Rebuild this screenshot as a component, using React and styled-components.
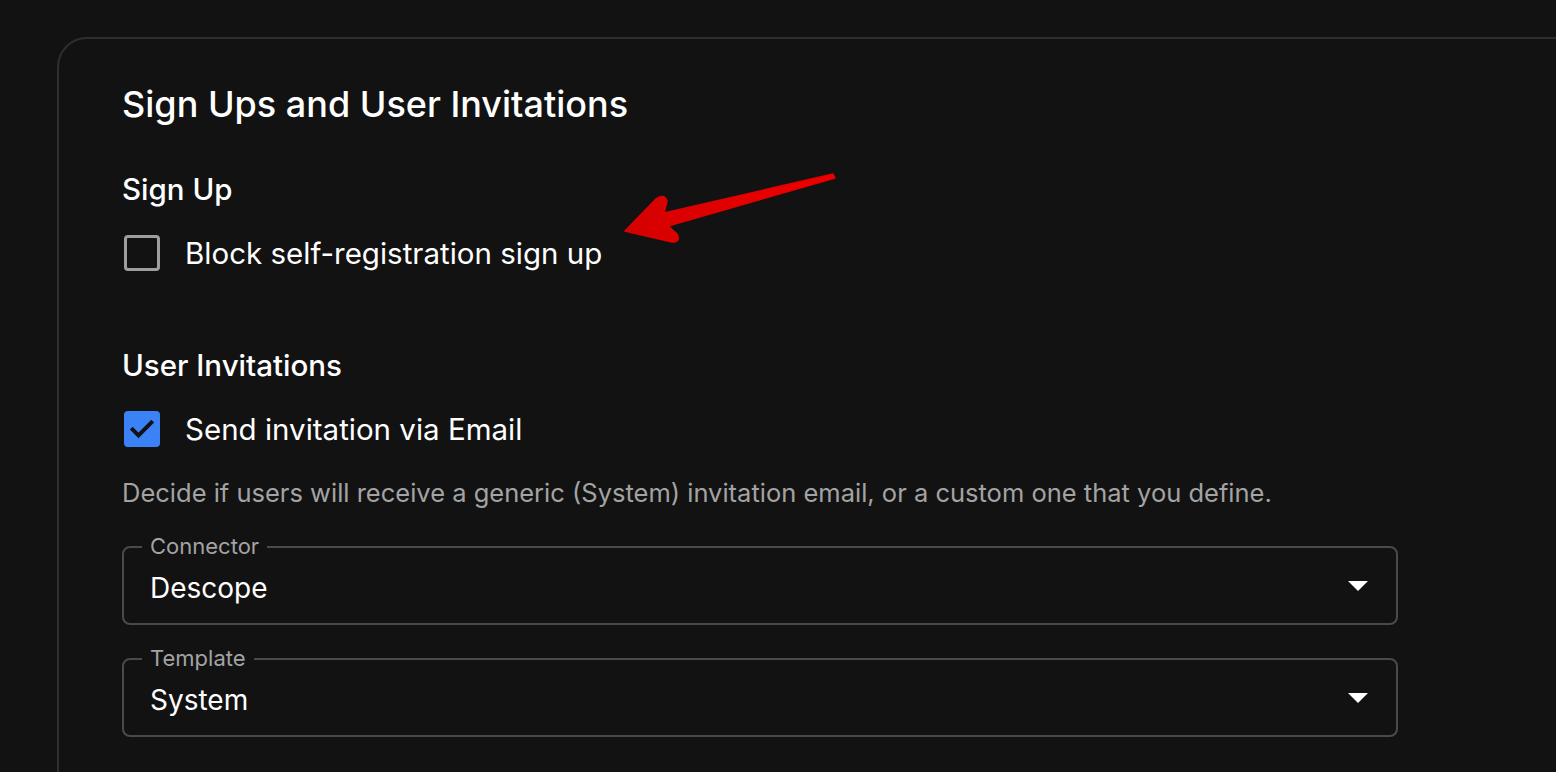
import React from "react"
import styled, {createGlobalStyle} from "styled-components"

const Global = createGlobalStyle`
  html, body {
    margin: 0;
    padding: 0;
    background: #121212;
    overflow: hidden;
  }
  body {
    font-family: Inter, "Noto Sans", sans-serif;
    color: #ffffff;
  }
`

const Page = styled.div`
  position: relative;
  width: 1556px;
  height: 772px;
  overflow: hidden;
  padding: 37px 0 0 57px;
  box-sizing: border-box;
`

const Card = styled.section`
  width: 1600px;
  height: 900px;
  box-sizing: border-box;
  border: 2px solid #2f2f2f;
  border-radius: 30px;
  background: #121212;
  padding: 42px 0 0 63px;
`

const Title = styled.h1`
  margin: 0;
  font-size: 36px;
  font-weight: 500;
  line-height: 46px;
`

const SectionTitle = styled.h2`
  margin: ${p => p.$top}px 0 0;
  font-size: 29.5px;
  font-weight: 500;
  line-height: 36px;
`

const CheckRow = styled.label`
  display: flex;
  align-items: center;
  gap: 25px;
  margin-top: ${p => p.$top}px;
  height: 40px;
  font-size: 29.5px;
  line-height: 36px;
  padding-left: 2px;
`

const Box = styled.span`
  width: 36px;
  height: 36px;
  flex: none;
  box-sizing: border-box;
  border-radius: 4px;
  border: ${p => (p.$checked ? "none" : "3px solid #9e9e9e")};
  background: ${p => (p.$checked ? "#3b82f6" : "transparent")};
  display: flex;
  align-items: center;
  justify-content: center;
`

const Hint = styled.p`
  margin: 29px 0 0;
  font-size: 25.5px;
  line-height: 30px;
  color: #a3a3a3;
`

const Field = styled.div`
  position: relative;
  width: 1276px;
  height: 79px;
  box-sizing: border-box;
  margin-top: ${p => p.$top}px;
  border: 2px solid #4a4a4a;
  border-radius: 8px;
  display: flex;
  align-items: center;
  padding: 5px 26px 0 26px;
`

const Legend = styled.span`
  position: absolute;
  top: -15px;
  left: 18px;
  padding: 0 8px;
  background: #121212;
  font-size: 22px;
  line-height: 26px;
  color: #a3a3a3;
`

const Value = styled.span`
  flex: 1;
  font-size: 28px;
  line-height: 36px;
`

const Caret = styled.span`
  width: 0;
  height: 0;
  border-left: 10px solid transparent;
  border-right: 10px solid transparent;
  border-top: 10px solid #ffffff;
  margin: -4px 2px 0 0;
`

const Arrow = styled.svg`
  position: absolute;
  left: 600px;
  top: 160px;
`

const Check = () => (
  <svg width="28" height="28" viewBox="0 0 24 24">
    <path d="M4 12.5l5 5L20 6.5" fill="none" stroke="#121212" strokeWidth="3.4" strokeLinecap="square" />
  </svg>
)

const Select = ({label, value, top}) => (
  <Field $top={top}>
    <Legend>{label}</Legend>
    <Value>{value}</Value>
    <Caret />
  </Field>
)

const App = () => {
  return (
    <Page>
      <Global />
      <Card>
        <Title>Sign Ups and User Invitations</Title>
        <SectionTitle $top={44}>Sign Up</SectionTitle>
        <CheckRow $top={26}>
          <Box />
          Block self-registration sign up
        </CheckRow>
        <SectionTitle $top={74}>User Invitations</SectionTitle>
        <CheckRow $top={26}>
          <Box $checked>
            <Check />
          </Box>
          Send invitation via Email
        </CheckRow>
        <Hint>Decide if users will receive a generic (System) invitation email, or a custom one that you define.</Hint>
        <Select label="Connector" value="Descope" top={38} />
        <Select label="Template" value="System" top={33} />
      </Card>
      {/* annotation arrow */}
      <Arrow width="260" height="100" viewBox="600 160 260 100">
        <defs>
          <linearGradient id="ar" x1="0" y1="0" x2="1" y2="0">
            <stop offset="0" stopColor="#d40000" />
            <stop offset="1" stopColor="#f00000" />
          </linearGradient>
        </defs>
        <path
          d="M833 174 L835 178 L668 226 L677 234 Q681 242 672 242 L625 231 L656 199 Q664 193 667 201 L664 213 Z"
          fill="url(#ar)"
          stroke="#e00000"
          strokeWidth="1.5"
          strokeLinejoin="round"
        />
      </Arrow>
    </Page>
  )
}

export default App
